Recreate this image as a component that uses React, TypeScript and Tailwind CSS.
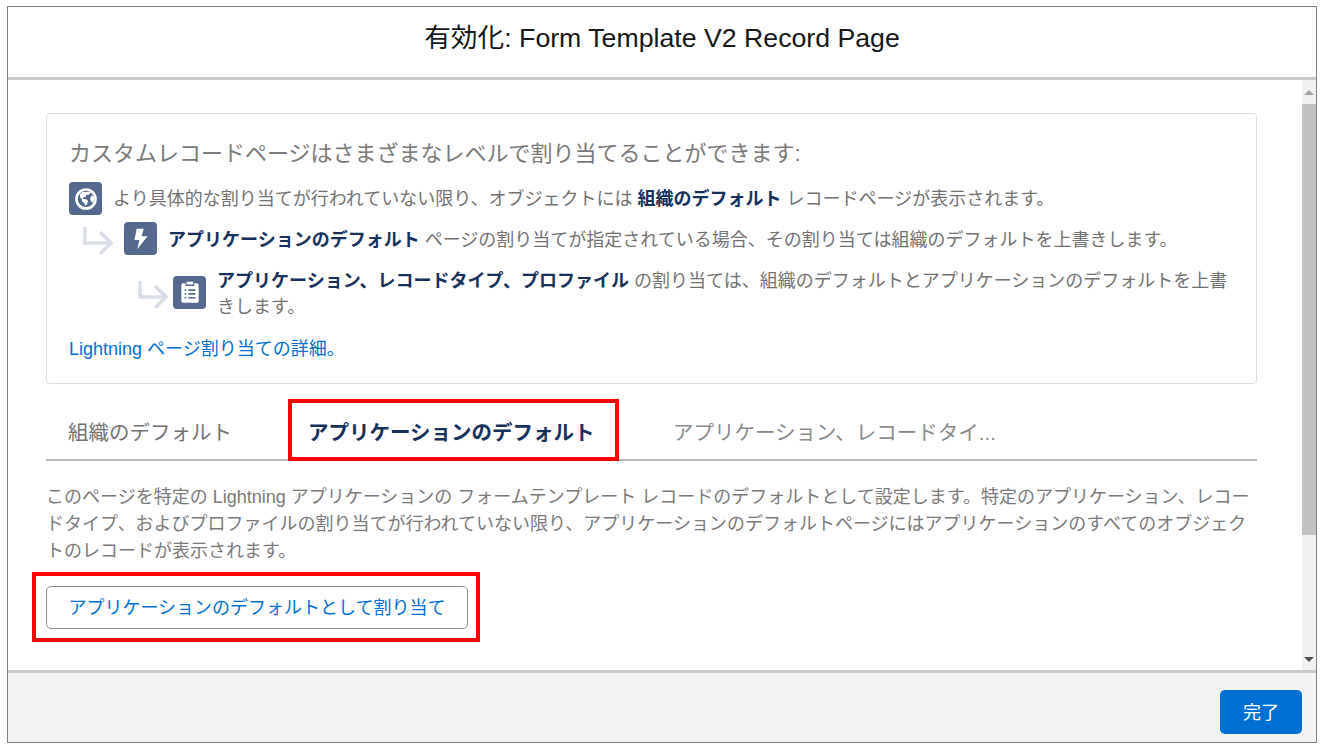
import React from 'react'

const FONT = 'font-["Liberation_Sans","Noto_Sans_CJK_JP",sans-serif]'

function IconTile({ children }: { children: React.ReactNode }) {
  return (
    <span className="flex h-[33px] w-[33px] shrink-0 items-center justify-center rounded-[4px] bg-[#54698d]">
      <svg viewBox="0 0 24 24" className="h-[26px] w-[26px]" fill="white">
        {children}
      </svg>
    </span>
  )
}

function ElbowArrow({ className }: { className: string }) {
  return (
    <svg viewBox="0 0 30 27" className={className} fill="none" stroke="#d8dde6" strokeWidth="3.5">
      <path d="M2 0v16h25M17 5l11 11-11 11" />
    </svg>
  )
}

function App() {
  return (
    <div className={`${FONT} h-[751px] w-[1325px] overflow-hidden bg-white pl-[7px] pt-[6px]`}>
      <div className="relative flex h-[737px] w-[1310px] flex-col border border-[#7f7f7f]">
        {/* ヘッダー */}
        <header className="flex h-[73px] shrink-0 items-center justify-center border-b-[3px] border-[#c9c9c9] pb-[8px] text-[26.7px] text-[#16181a]">
          有効化: Form Template V2 Record Page
        </header>

        {/* 本体 */}
        <div className="flex min-h-0 flex-1">
          <main className="min-w-0 flex-1 pl-[38px] pr-[45px] pt-[33px]">
            <section className="h-[271px] rounded-[4px] border border-[#d8dde6] px-[22px] pt-[22px] text-[18px] text-[#727272]">
              <h2 className="text-[22px] leading-[36px] text-[#7a7a7a]">
                カスタムレコードページはさまざまなレベルで割り当てることができます:
              </h2>
              <div className="mt-[10px] flex items-center gap-[11px]">
                <IconTile>
                  <path fillRule="evenodd" d="M12 2a10 10 0 1 0 0 20 10 10 0 0 0 0-20Zm0 2.400a7.600 7.600 0 1 1 0 15.200 7.600 7.600 0 0 1 0-15.200Z" />
                  <path d="M6.500 7.500 9 5.200l3.500.3 2.500-.5 1.500 1.200-2 1.800-2.300.3-.5 1.700-2.500.5.300 1.500 2.800.2 1.700 1.700-1 2.800-1.500 1.800-1-2.800-2.200-1.500-.3-2.400-1.600-1.500.1-2.300Z" />
                  <path d="m17.500 8.500 1.800 1.500.4 3-1.500 2.500-1.500-1.500-1-2.300.7-1.300 1.100-1.900Z" />
                </IconTile>
                <p className="pt-[2px]">
                  より具体的な割り当てが行われていない限り、オブジェクトには{' '}
                  <strong className="font-bold text-[#16325c]">組織のデフォルト</strong> レコードページが表示されます。
                </p>
              </div>
              <div className="ml-[14px] mt-[7px] flex items-center">
                <ElbowArrow className="mt-[4px] h-[27px] w-[30px] shrink-0" />
                <span className="ml-[11px]">
                  <IconTile>
                    <path d="M14.500 2.500H8L6 13h4.500L8.500 21.500 18 9.500h-5.500L14.500 2.500Z" />
                  </IconTile>
                </span>
                <p className="ml-[11px] whitespace-nowrap pt-[4px]">
                  <strong className="font-bold text-[#16325c]">アプリケーションのデフォルト</strong>{' '}
                  ページの割り当てが指定されている場合、その割り当ては組織のデフォルトを上書きします。
                </p>
              </div>
              <div className="ml-[69px] mt-[9px] flex items-center">
                <ElbowArrow className="mt-[4px] h-[27px] w-[30px] shrink-0" />
                <span className="ml-[5px]">
                  <IconTile>
                    <path fillRule="evenodd" d="M9 2.500h6V5H9V2.500ZM5.500 4H8v2.500h8V4h2.500A1.500 1.500 0 0 1 20 5.500v15a1.500 1.500 0 0 1-1.500 1.500h-13A1.500 1.500 0 0 1 4 20.500v-15A1.500 1.500 0 0 1 5.500 4ZM7 9.500V11h1.500V9.500H7Zm3.500 0V11H17V9.500h-6.500ZM7 13v1.500h1.500V13H7Zm3.500 0v1.500H17V13h-6.500ZM7 16.500V18h1.500v-1.500H7Zm3.500 0V18H17v-1.500h-6.500Z" />
                  </IconTile>
                </span>
                <p className="ml-[11px] w-[1012px] pt-[4px] leading-[26px]">
                  <strong className="font-bold text-[#16325c]">アプリケーション、レコードタイプ、プロファイル</strong>{' '}
                  の割り当ては、組織のデフォルトとアプリケーションのデフォルトを上書きします。
                </p>
              </div>
              <a className="mt-[16px] block text-[#0070d2]">Lightning ページ割り当ての詳細。</a>
            </section>

            {/* タブ */}
            <nav className="mt-[16px] flex h-[61px] border-b-2 border-[#b9b9b9] pt-[7px] text-[20.5px]">
              <span className="flex w-[243px] items-center pl-[22px] text-[#727272]">組織のデフォルト</span>
              <span className="flex w-[384px] items-center pl-[19px] font-bold text-[#16325c]">アプリケーションのデフォルト</span>
              <span className="flex items-center text-[#8a8a8a]">アプリケーション、レコードタイ...</span>
            </nav>

            <p className="mt-[23px] text-[18px] leading-[27px] text-[#7a7a7a]">
              このページを特定の Lightning アプリケーションの フォームテンプレート レコードのデフォルトとして設定します。特定のアプリケーション、レコードタイプ、およびプロファイルの割り当てが行われていない限り、アプリケーションのデフォルトページにはアプリケーションのすべてのオブジェクトのレコードが表示されます。
            </p>

            <button className="mt-[21px] flex h-[43px] w-[422px] items-center justify-center rounded-[5px] border border-[#8f8f8f] bg-white pt-[2px] text-[18px] text-[#0070d2]">
              アプリケーションのデフォルトとして割り当て
            </button>
          </main>

          {/* スクロールバー */}
          <div className="flex w-[14px] shrink-0 flex-col bg-[#f1f1f1]">
            <div className="flex h-[24px] items-center justify-center">
              <span className="h-0 w-0 border-x-[5px] border-b-[5px] border-x-transparent border-b-[#a3a3a3]" />
            </div>
            <div className="h-[431px] bg-[#c1c1c1]" />
            <div className="flex flex-1 items-end justify-center pb-[8px]">
              <span className="h-0 w-0 border-x-[5px] border-t-[5px] border-x-transparent border-t-[#505050]" />
            </div>
          </div>
        </div>

        {/* フッター */}
        <footer className="flex h-[72px] shrink-0 items-start justify-end border-t-[3px] border-[#c9c9c9] bg-[#f3f3f3] pr-[14px] pt-[17px]">
          <button className="h-[44px] w-[82px] rounded-[5px] bg-[#0070d2] pt-[2px] text-[18px] text-white">完了</button>
        </footer>

        {/* 注釈の赤枠 */}
        <div className="absolute left-[280px] top-[392px] h-[62px] w-[331px] border-[4px] border-[#ff0000]" />
        <div className="absolute left-[24px] top-[565px] h-[70px] w-[448px] border-[4px] border-[#ff0000]" />
      </div>
    </div>
  )
}

export default App
